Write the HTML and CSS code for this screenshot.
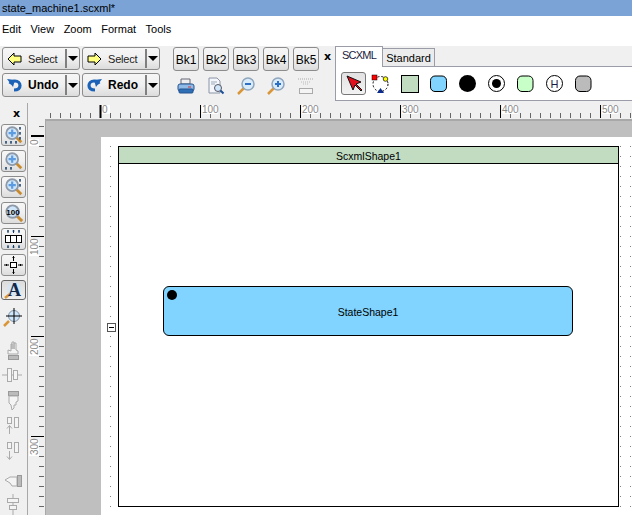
FILE: index.html

```html
<!DOCTYPE html>
<html lang="en">
<head>
    <meta charset="UTF-8">
    <title>state_machine1.scxml</title>
    <link rel="stylesheet" href="styles.css">
</head>
<body>
<svg class="defs" width="0" height="0">
    <symbol id="lens" viewBox="0 0 22 22">
        <path d="M13 13l6 6" stroke="#c98a2e" stroke-width="3"/>
        <circle cx="9" cy="9" r="6.500" fill="#cfe6fa" stroke="#8d99a8" stroke-width="2"/>
    </symbol>
    <symbol id="plus" viewBox="0 0 22 22">
        <path d="M9 5v8M5 9h8" stroke="#5c9be0" stroke-width="2.400"/>
    </symbol>
</svg>

<div class="titlebar">state_machine1.scxml*</div>

<div class="menubar">
    <span>Edit</span><span>View</span><span>Zoom</span><span>Format</span><span>Tools</span>
</div>

<div class="toolbar">
    <div class="history">
        <div class="split">
            <div class="split-main">
                <svg width="16" height="14" viewBox="0 0 16 14"><path d="M1 7l6-6v3h7v6H7v3z" fill="#ffff80" stroke="#000"/></svg>
                <span>Select</span>
            </div>
            <div class="split-drop"><i></i></div>
        </div>
        <div class="split">
            <div class="split-main">
                <svg width="16" height="14" viewBox="0 0 16 14"><path d="M14 7L8 1v3H1v6h7v3z" fill="#ffff80" stroke="#000"/></svg>
                <span>Select</span>
            </div>
            <div class="split-drop"><i></i></div>
        </div>
        <div class="split">
            <div class="split-main strong">
                <svg width="16" height="14" viewBox="0 0 16 14"><path d="M3 6c1-2 3-3 5-3 3 0 5 2 5 4.500S11 12 7 12" fill="none" stroke="#1c63b8" stroke-width="3.200"/><path d="M0 1l8 1-2 7z" fill="#1c63b8"/></svg>
                <span>Undo</span>
            </div>
            <div class="split-drop"><i></i></div>
        </div>
        <div class="split">
            <div class="split-main strong">
                <svg width="16" height="14" viewBox="0 0 16 14"><path d="M12 6c-1-2-3-3-5-3-3 0-5 2-5 4.500S4 12 8 12" fill="none" stroke="#1c63b8" stroke-width="3.200"/><path d="M15 1L7 2l2 7z" fill="#1c63b8"/></svg>
                <span>Redo</span>
            </div>
            <div class="split-drop"><i></i></div>
        </div>
    </div>

    <div class="bookmarks">
        <div class="bk-row">
            <div class="bk">Bk1</div>
            <div class="bk">Bk2</div>
            <div class="bk">Bk3</div>
            <div class="bk">Bk4</div>
            <div class="bk">Bk5</div>
        </div>
        <div class="bk-row tools">
            <svg width="26" height="20" viewBox="0 0 26 20"><path d="M8 3h9v5H8z" fill="#eee" stroke="#667"/><rect x="5" y="8" width="16" height="7" rx="2" fill="#8fbbe6" stroke="#24558f"/><rect x="6" y="13" width="14" height="4" rx="1" fill="#2f6fb5" stroke="#24558f"/><path d="M15 11h3" stroke="#d33"/></svg>
            <svg width="26" height="20" viewBox="0 0 26 20"><path d="M6 2h8l3 3v12H6z" fill="#f4f6fb" stroke="#8a94a6"/><path d="M8 6h6M8 8h4" stroke="#9ab"/><circle cx="15" cy="12" r="3.500" fill="#cfe6fa" stroke="#556"/><path d="M17.500 14.500l3 3" stroke="#1c4f99" stroke-width="2"/></svg>
            <svg width="26" height="20" viewBox="0 0 26 20"><path d="M11 12l-6 6" stroke="#d9973a" stroke-width="2.500"/><circle cx="15" cy="8" r="6" fill="#d8ebfb" stroke="#8fa6bd" stroke-width="1.500"/><path d="M12 8h6" stroke="#2d6fc4" stroke-width="2"/></svg>
            <svg width="26" height="20" viewBox="0 0 26 20"><path d="M11 12l-6 6" stroke="#d9973a" stroke-width="2.500"/><circle cx="15" cy="8" r="6" fill="#d8ebfb" stroke="#8fa6bd" stroke-width="1.500"/><path d="M12 8h6M15 5v6" stroke="#2d6fc4" stroke-width="2"/></svg>
            <svg width="26" height="20" viewBox="0 0 26 20"><path d="M5 3h16" stroke="#aaa" stroke-dasharray="1 1"/><path d="M8 6h10M10 8h6" stroke="#bbb" stroke-dasharray="1 1"/><rect x="6.500" y="12.500" width="13" height="5" fill="#f4f4f4" stroke="#aaa"/></svg>
        </div>
    </div>

    <div class="closer">x</div>

    <div class="palette-box">
        <div class="tabs">
            <div class="tab active">SCXML</div>
            <div class="tab">Standard</div>
        </div>
        <div class="palette">
            <div class="pick">
                <svg width="20" height="19" viewBox="0 0 20 19"><path d="M3 2l6 14 2-5 6 6 1-1-6-6 5-2z" fill="#e0101c" stroke="#111"/></svg>
            </div>
            <svg class="connector" width="19" height="21" viewBox="0 0 19 21"><circle cx="9.500" cy="10" r="7.500" fill="none" stroke="#000" stroke-dasharray="2 2"/><rect x="1" y="1" width="5" height="5" fill="#f00" stroke="#000" stroke-width=".5"/><circle cx="14.500" cy="5" r="2.300" fill="#ff0" stroke="#000" stroke-width=".7"/><path d="M9.500 14l3.500 5H6z" fill="#0a2a8c"/></svg>
            <svg width="18" height="18" viewBox="0 0 18 18"><rect x=".5" y=".5" width="17" height="17" fill="#c1dcc1" stroke="#000"/></svg>
            <svg width="18" height="18" viewBox="0 0 18 18"><rect x=".5" y="1" width="16" height="15.500" rx="4.500" fill="#80d4ff" stroke="#000"/></svg>
            <svg width="18" height="18" viewBox="0 0 18 18"><circle cx="8.500" cy="8.500" r="8.500" fill="#000"/></svg>
            <svg width="18" height="18" viewBox="0 0 18 18"><circle cx="8.500" cy="8.500" r="8" fill="#fff" stroke="#000"/><circle cx="8.500" cy="8.500" r="4.500" fill="#000"/></svg>
            <svg width="18" height="18" viewBox="0 0 18 18"><rect x=".5" y="1" width="15.500" height="15.500" rx="4.500" fill="#c8ffc8" stroke="#000"/></svg>
            <svg width="18" height="18" viewBox="0 0 18 18"><circle cx="8.500" cy="8.500" r="8" fill="#fff" stroke="#000"/><text x="8.500" y="13" class="h-mark">H</text></svg>
            <svg width="18" height="18" viewBox="0 0 18 18"><rect x=".5" y="1" width="15.500" height="15.500" rx="4.500" fill="#bbb" stroke="#000"/></svg>
        </div>
    </div>
</div>

<div class="main">
    <div class="dock">
        <div class="closer dock-closer">x</div>
        <div class="dock-btn">
            <svg width="23" height="20" viewBox="0 0 23 20"><use href="#lens" width="20" height="20" x="2" y="0"/><use href="#plus" width="20" height="20" x="2" y="0"/><path class="mini" d="M4 16v3M3 17h2M9 16v3M8 17h2M14 16v3M13 17h2M18 2v3M17 3h2M18 7v3M17 8h2M18 12v3M17 13h2"/></svg>
        </div>
        <div class="dock-btn">
            <svg width="23" height="20" viewBox="0 0 23 20"><use href="#lens" width="20" height="20" x="2" y="0"/><use href="#plus" width="20" height="20" x="2" y="0"/><path class="mini" d="M4 16v3M3 17h2M9 16v3M8 17h2"/></svg>
        </div>
        <div class="dock-btn">
            <svg width="23" height="20" viewBox="0 0 23 20"><use href="#lens" width="20" height="20" x="2" y="0"/><use href="#plus" width="20" height="20" x="2" y="0"/><path class="mini" d="M18 2v3M17 3h2M18 7v3M17 8h2"/></svg>
        </div>
        <div class="dock-btn">
            <svg width="23" height="20" viewBox="0 0 23 20"><use href="#lens" width="21" height="21" x="2" y="0"/><text x="11" y="12" class="hundred">100</text></svg>
        </div>
        <div class="dock-btn">
            <svg width="23" height="20" viewBox="0 0 23 20"><path class="mini" d="M6 1v3M5 2h2M11.500 1v3M10.500 2h2M17 1v3M16 2h2M6 16v3M5 18h2M11.500 16v3M10.500 18h2M17 16v3M16 18h2"/><rect x="3.500" y="6.500" width="16" height="7" fill="#fff" stroke="#000"/><path d="M8.500 6.500v7M14.500 6.500v7" stroke="#000"/></svg>
        </div>
        <div class="dock-btn">
            <svg width="23" height="20" viewBox="0 0 23 20"><rect x="8.500" y="7.500" width="6" height="5" fill="#fff" stroke="#000"/><path d="M11.500 1v5M10.500 2.500h2M11.500 14v5M10.500 17.500h2M2 10h5M4.500 9v2M16 10h5M18.500 9v2" fill="none" stroke="#000"/></svg>
        </div>
        <div class="dock-btn pressed">
            <svg width="23" height="18" viewBox="0 0 23 18"><path d="M9 12l-6 5" stroke="#d9973a" stroke-width="2.500"/><circle cx="12" cy="8" r="7" fill="#cfe6fa" opacity=".7"/><text x="12.500" y="15" class="big-a">A</text></svg>
        </div>
        <div class="dock-icon first">
            <svg width="23" height="23" viewBox="0 0 23 23"><path d="M8 15l-5 5" stroke="#d9973a" stroke-width="2.500"/><circle cx="13" cy="10" r="5.500" fill="#cfe6fa" stroke="#7f93a8"/><path d="M13 2v16M5 10h16" stroke="#000"/></svg>
        </div>
        <div class="dock-off">
            <svg width="23" height="23" viewBox="0 0 23 23"><path d="M7 15v-4l3 1V5h1v5-7h2v7-6h2v7l2 1v3z" fill="#f4f4f4" stroke="#aaa"/><rect x="7.500" y="16.500" width="10" height="4" fill="#bbb" stroke="#999"/></svg>
        </div>
        <div class="dock-off">
            <svg width="23" height="23" viewBox="0 0 23 23"><path d="M1 11h20" stroke="#aaa"/><rect x="6.500" y="4.500" width="4" height="13" fill="#f4f4f4" stroke="#aaa"/><rect x="12.500" y="6.500" width="4" height="9" fill="#f4f4f4" stroke="#aaa"/></svg>
        </div>
        <div class="dock-off">
            <svg width="23" height="23" viewBox="0 0 23 23"><rect x="7.500" y="2.500" width="10" height="4" fill="#bbb" stroke="#999"/><path d="M8 7h9v5l-2 1v3h-2v3l-2 2-1-5-2-2z" fill="#f4f4f4" stroke="#aaa"/></svg>
        </div>
        <div class="dock-off">
            <svg width="23" height="23" viewBox="0 0 23 23"><rect x="6.500" y="3.500" width="4" height="6" fill="#f4f4f4" stroke="#aaa"/><rect x="13.500" y="3.500" width="4" height="10" fill="#f4f4f4" stroke="#aaa"/><path d="M8.500 20v-8M6 14.500l2.500-3 2.500 3" fill="none" stroke="#aaa"/></svg>
        </div>
        <div class="dock-off">
            <svg width="23" height="23" viewBox="0 0 23 23"><rect x="6.500" y="3.500" width="4" height="6" fill="#f4f4f4" stroke="#aaa"/><rect x="13.500" y="3.500" width="4" height="10" fill="#f4f4f4" stroke="#aaa"/><path d="M8.500 12v8M6 17.500l2.500 3 2.500-3" fill="none" stroke="#aaa"/></svg>
        </div>
        <div class="dock-off gap">
            <svg width="23" height="23" viewBox="0 0 23 23"><path d="M4 11l5-3h7v9h-5l-2-3z" fill="#f4f4f4" stroke="#aaa"/><rect x="16.500" y="6.500" width="4" height="11" fill="#bbb" stroke="#999"/></svg>
        </div>
        <div class="dock-off">
            <svg width="23" height="23" viewBox="0 0 23 23"><path d="M12 1v21" stroke="#aaa"/><rect x="6.500" y="5.500" width="11" height="4" fill="#f4f4f4" stroke="#aaa"/><rect x="8.500" y="12.500" width="7" height="4" fill="#f4f4f4" stroke="#aaa"/></svg>
        </div>
    </div>

    <div class="work">
        <div class="corner"></div>
        <svg class="ruler" width="587" height="16" viewBox="0 0 587 16">
            <defs>
                <pattern id="hticks" width="10" height="16" patternUnits="userSpaceOnUse">
                    <path d="M5.500 10v5" stroke="#666"/>
                </pattern>
            </defs>
            <rect width="587" height="16" fill="url(#hticks)"/>
            <g class="label-bg">
                <rect x="57" y="2" width="8" height="9"/>
                <rect x="157" y="2" width="16" height="9"/>
                <rect x="257" y="2" width="16" height="9"/>
                <rect x="357" y="2" width="16" height="9"/>
                <rect x="457" y="2" width="16" height="9"/>
                <rect x="557" y="2" width="16" height="9"/>
            </g>
            <path d="M155.500 2v13M255.500 2v13M355.500 2v13M455.500 2v13M555.500 2v13" stroke="#000"/>
            <path d="M55.500 2v13" stroke="#000" stroke-width="2"/>
            <g class="ruler-text">
                <text x="57" y="10">0</text>
                <text x="157" y="10">100</text>
                <text x="257" y="10">200</text>
                <text x="357" y="10">300</text>
                <text x="457" y="10">400</text>
                <text x="557" y="10">500</text>
            </g>
        </svg>

        <svg class="ruler" width="17" height="396" viewBox="0 0 17 396">
            <defs>
                <pattern id="vticks" width="17" height="10" y="2" patternUnits="userSpaceOnUse">
                    <path d="M11 5.500h5" stroke="#666"/>
                </pattern>
            </defs>
            <rect width="17" height="396" fill="url(#vticks)"/>
            <g class="label-bg">
                <rect x="1" y="20" width="10" height="7"/>
                <rect x="1" y="121" width="10" height="16"/>
                <rect x="1" y="221" width="10" height="16"/>
                <rect x="1" y="321" width="10" height="16"/>
            </g>
            <path d="M3 117.500h13M3 217.500h13M3 317.500h13" stroke="#000"/>
            <path d="M3 17h13" stroke="#000" stroke-width="2"/>
            <g class="ruler-text">
                <text transform="translate(10 26) rotate(-90)">0</text>
                <text transform="translate(10 136) rotate(-90)">100</text>
                <text transform="translate(10 236) rotate(-90)">200</text>
                <text transform="translate(10 336) rotate(-90)">300</text>
            </g>
        </svg>

        <div class="canvas">
            <div class="page">
                <svg class="grid" width="531" height="378">
                    <defs>
                        <pattern id="dots" width="10" height="10" patternUnits="userSpaceOnUse">
                            <rect x="9" y="9" width="1" height="1" fill="#808080"/>
                        </pattern>
                    </defs>
                    <rect width="531" height="378" fill="url(#dots)"/>
                </svg>
                <div class="collapse"></div>
                <div class="scxml-shape">
                    <div class="scxml-head">ScxmlShape1</div>
                </div>
                <div class="state-shape">
                    StateShape1
                    <div class="initial"></div>
                </div>
            </div>
        </div>
    </div>
</div>
</body>
</html>
```

FILE: styles.css

```css
html, body {
    margin: 0;
    height: 100%;
    overflow: hidden;
}

body {
    width: 632px;
    height: 515px;
    font-family: "Liberation Sans", Arial, sans-serif;
    font-size: 11px;
    color: #000;
    background: #f0f0f0;
    display: flex;
    flex-direction: column;
}

svg {
    display: block;
    flex: none;
}

.defs {
    position: absolute;
}

.titlebar {
    height: 16px;
    line-height: 17px;
    padding-left: 2px;
    background: #7ba3d6;
    flex: none;
}

.menubar {
    height: 30px;
    background: #fff;
    display: flex;
    flex: none;
    padding-left: 2px;
    padding-top: 7px;
    box-sizing: border-box;
    gap: 9.500px;
}

.toolbar {
    height: 55px;
    flex: none;
    display: flex;
}

.history {
    width: 173px;
    padding: 1px 0 0 2px;
    box-sizing: border-box;
    display: grid;
    grid-template-columns: 78px 78px;
    grid-template-rows: 23px 24px;
    column-gap: 2px;
    row-gap: 3px;
}

.split {
    display: flex;
    border: 1px solid #8c8c8c;
    border-radius: 3px;
    background: linear-gradient(#f6f6f6, #f0f0f0 50%, #dcdcdc);
    box-sizing: border-box;
    padding: 1px 0;
}

.split-main {
    flex: 1;
    display: flex;
    align-items: center;
    gap: 5px;
    padding-left: 4px;
    color: #222;
    letter-spacing: -.2px;
    border-right: 2px solid #808080;
}

.split-main.strong {
    font-weight: bold;
    color: #000;
    font-size: 12px;
    letter-spacing: 0;
}

.split-drop {
    width: 12px;
    display: flex;
    align-items: center;
    justify-content: center;
}

.split-drop i {
    border-top: 5px solid #000;
    border-left: 5px solid transparent;
    border-right: 5px solid transparent;
}

.bookmarks {
    width: 151px;
    padding-top: 1px;
    box-sizing: border-box;
}

.bk-row {
    display: flex;
    gap: 4px;
}

.bk {
    width: 26px;
    height: 24px;
    line-height: 25px;
    font-size: 12px;
    text-align: center;
    box-sizing: border-box;
    border: 1px solid #8c8c8c;
    border-radius: 3px;
    background: linear-gradient(#f6f6f6, #f0f0f0 50%, #dcdcdc);
}

.bk-row.tools {
    margin-top: 5px;
}

.closer {
    width: 11px;
    font-weight: bold;
    font-size: 11px;
    text-align: left;
    padding-top: 4px;
    font-family: "DejaVu Sans", sans-serif;
}

.palette-box {
    flex: 1;
    display: flex;
    flex-direction: column;
}

.tabs {
    height: 20px;
    display: flex;
    align-items: flex-end;
    flex: none;
}

.tab {
    height: 18px;
    line-height: 19px;
    width: 53px;
    text-align: center;
    box-sizing: border-box;
    border: 1px solid #9a9ca8;
    border-bottom: none;
    background: #ececec;
    margin-left: -1px;
}

.tab.active {
    height: 21px;
    width: 48px;
    margin-left: 0;
    margin-bottom: -1px;
    line-height: 17px;
    background: #fff;
    color: #1a1a40;
    letter-spacing: -.8px;
    position: relative;
}

.palette {
    flex: 1;
    background: #fff;
    border: 1px solid #9a9ca8;
    border-right: none;
    display: flex;
    align-items: center;
    gap: 11px;
    padding-left: 5px;
}

.pick {
    width: 25px;
    height: 23px;
    margin-right: -6px;
    box-sizing: border-box;
    border: 1px solid #777;
    border-radius: 3px;
    background: linear-gradient(#e2e2e2, #f2f2f2);
    display: flex;
    align-items: center;
    justify-content: center;
}

.connector {
    margin-top: 1px;
}

.h-mark {
    font-family: "Liberation Sans", sans-serif;
    font-size: 11px;
    text-anchor: middle;
    fill: #1a1a40;
}

.main {
    flex: 1;
    min-height: 0;
    display: flex;
}

.dock {
    width: 27px;
    flex: none;
    border-right: 1px solid #a8a8a8;
    display: flex;
    flex-direction: column;
    align-items: flex-start;
    overflow: hidden;
    margin-top: 2px;
}

.dock-closer {
    height: 17px;
    padding: 4px 0 0 13px;
    flex: none;
}

.dock-btn {
    width: 25px;
    height: 22px;
    margin: 0 0 4px 1px;
    flex: none;
    box-sizing: border-box;
    border: 1px solid #8c8c8c;
    border-radius: 3px;
    background: linear-gradient(#f6f6f6, #f0f0f0 50%, #dcdcdc);
    display: flex;
    align-items: center;
    justify-content: center;
    overflow: hidden;
}

.dock-btn.pressed {
    height: 20px;
    border-color: #666;
    background: linear-gradient(#dcdcdc, #efefef);
}

.mini {
    fill: none;
    stroke: #123a66;
}

.hundred {
    font-size: 8px;
    font-weight: bold;
    text-anchor: middle;
}

.big-a {
    font-family: "Liberation Serif", serif;
    font-size: 18px;
    font-weight: bold;
    text-anchor: middle;
    fill: #10284a;
}

.dock-icon, .dock-off {
    height: 23px;
    margin-left: 1px;
    flex: none;
}

.dock-icon.first {
    margin-top: 2px;
    margin-bottom: 10px;
}

.dock-off {
    margin-bottom: 2px;
}

.dock-off.gap {
    margin-top: 5px;
    margin-bottom: 1px;
}

.work {
    flex: 1;
    min-width: 0;
    display: grid;
    grid-template-columns: 17px 587px;
    grid-template-rows: 18px 396px;
    overflow: hidden;
}

.ruler {
    align-self: end;
}

.label-bg rect {
    fill: #fff;
}

.ruler-text text {
    font-size: 10px;
    fill: #8a8a8a;
}

.canvas {
    background: #bfbfbf;
    border-left: 1px solid #a8a8a8;
    border-top: 2px solid #a8a8a8;
    padding: 16px 0 0 55px;
    overflow: hidden;
    box-sizing: border-box;
}

.page {
    position: relative;
    background: #fff;
    height: 400px;
}

.grid {
    position: absolute;
    left: 0;
    top: 0;
}

.scxml-shape {
    position: absolute;
    left: 17px;
    top: 9px;
    width: 501px;
    height: 361px;
    box-sizing: border-box;
    border: 1px solid #000;
    background: #fff;
}

.scxml-head {
    height: 17px;
    line-height: 18px;
    box-sizing: border-box;
    border-bottom: 1px solid #000;
    background: #c1dcc1;
    text-align: center;
    font-size: 10.500px;
}

.state-shape {
    position: absolute;
    left: 62px;
    top: 149px;
    width: 410px;
    height: 50px;
    line-height: 50px;
    box-sizing: border-box;
    border: 1px solid #000;
    border-radius: 6px;
    background: #80d4ff;
    text-align: center;
    font-size: 10.500px;
}

.initial {
    position: absolute;
    left: 3px;
    top: 3px;
    width: 10px;
    height: 10px;
    border-radius: 50%;
    background: #000;
}

.collapse {
    position: absolute;
    left: 6px;
    top: 186px;
    width: 7px;
    height: 7px;
    border: 1px solid #555;
    background: #fff;
}

.collapse::after {
    content: "";
    display: block;
    margin: 3px 1px 0;
    height: 1px;
    background: #000;
}
```
